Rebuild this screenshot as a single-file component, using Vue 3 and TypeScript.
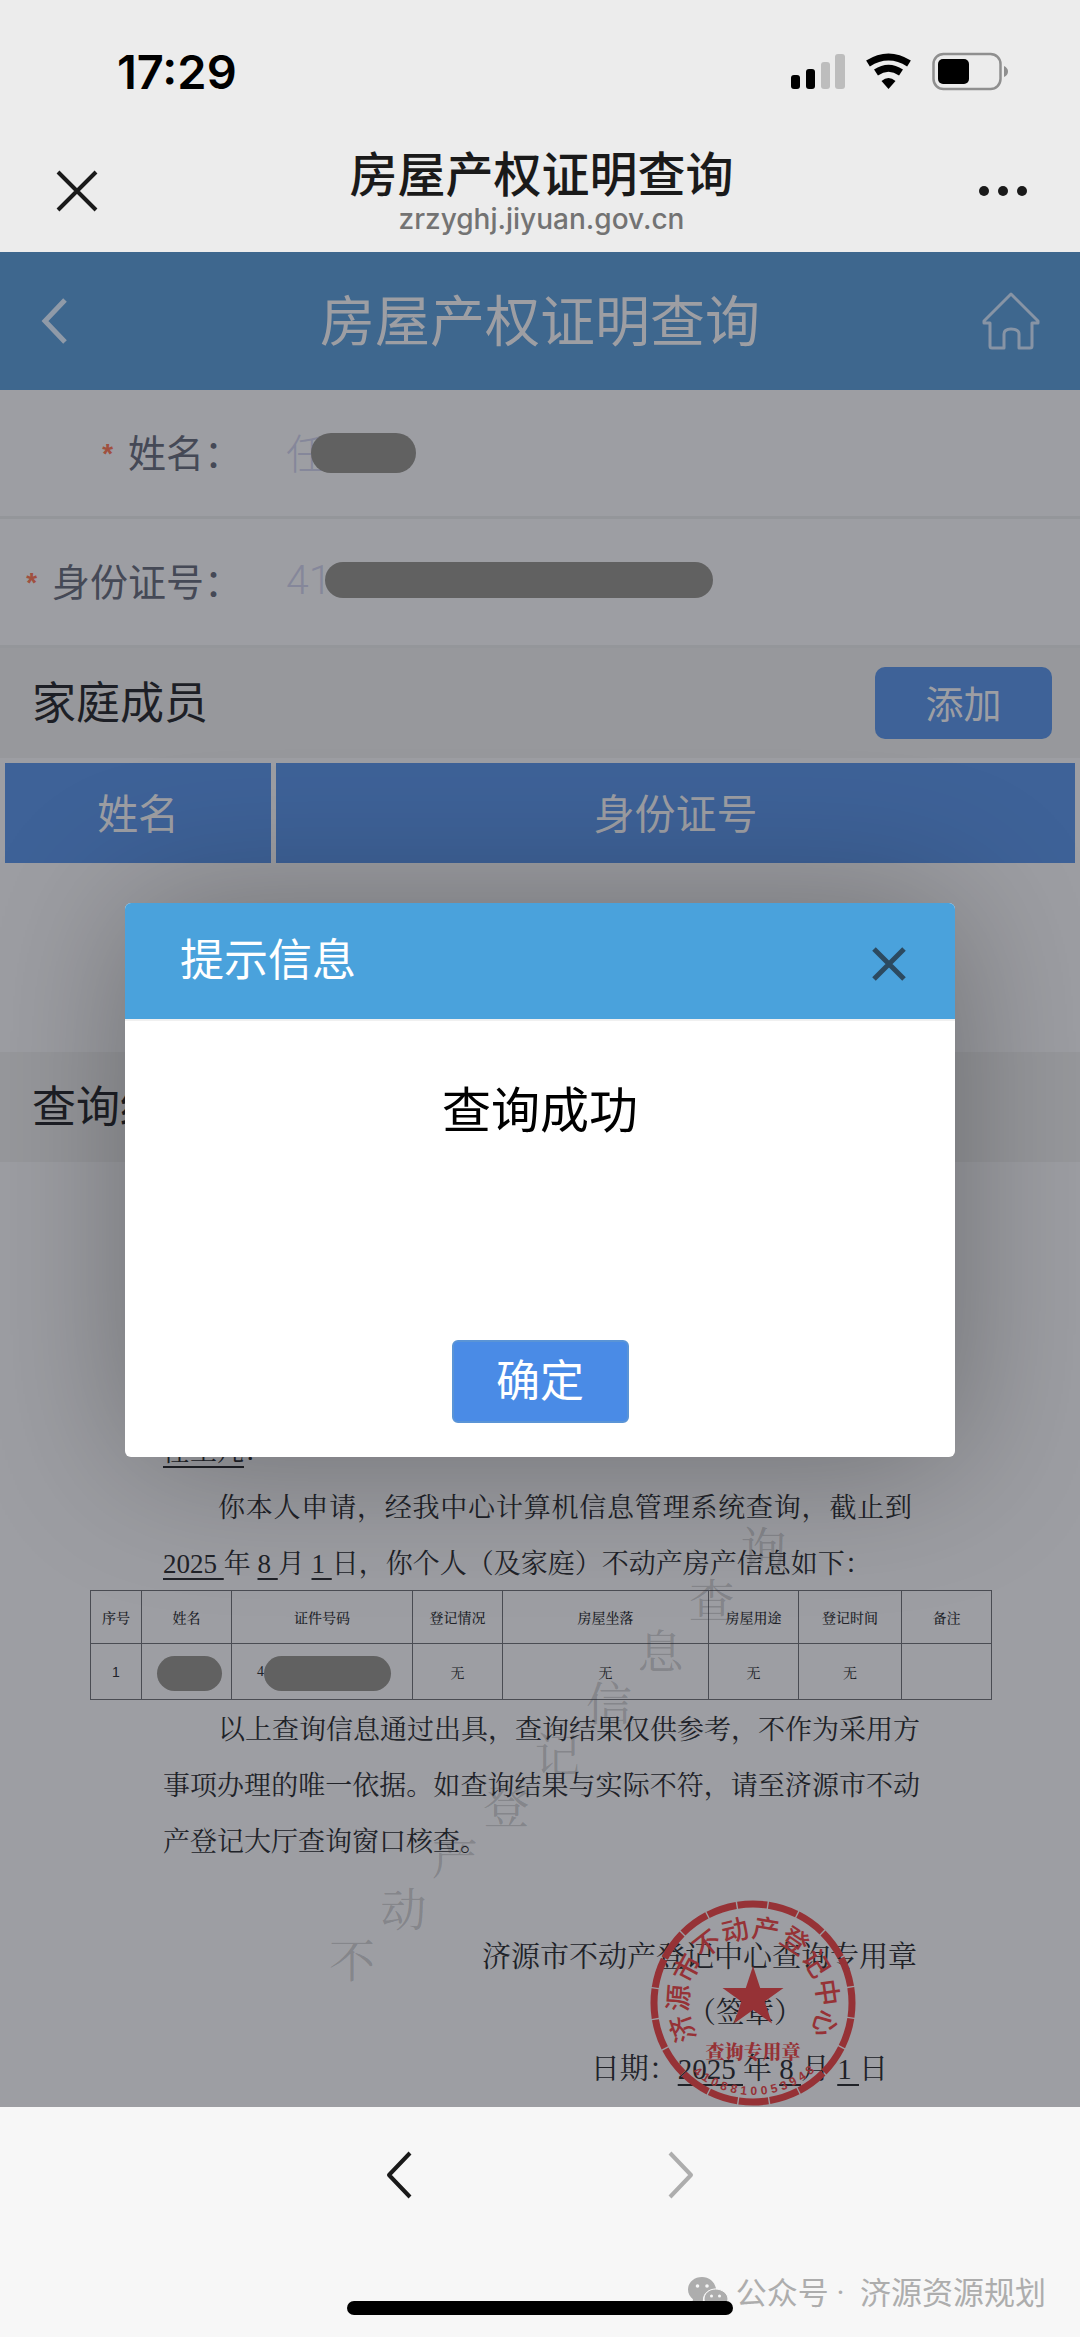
<script setup lang="ts">
import { ref } from 'vue'

interface SealGlyph {
  char: string
  x: number
  y: number
  turn: number
}

const dialogOpen = ref(true)
const ownerName = ref('任')
const ownerId = ref('41')

const recordColumns = ['序号', '姓名', '证件号码', '登记情况', '房屋坐落', '房屋用途', '登记时间', '备注']
const watermark = Array.from('不动产登记信息查询')

// Lays characters along an arc; angles are in degrees clockwise from the top.
function topArc(text: string, radius: number, start: number, step: number): SealGlyph[] {
  return Array.from(text).map((char, i) => {
    const angle = start + i * step
    const rad = (angle * Math.PI) / 180
    return { char, x: Math.sin(rad) * radius, y: -Math.cos(rad) * radius, turn: angle }
  })
}

function bottomArc(text: string, radius: number, start: number, step: number): SealGlyph[] {
  return Array.from(text).map((char, i) => {
    const angle = start + i * step
    const rad = (angle * Math.PI) / 180
    return { char, x: Math.sin(rad) * radius, y: Math.cos(rad) * radius, turn: -angle }
  })
}

const sealName = topArc('济源市不动产登记中心', 75, -110, 24)
const sealCode = bottomArc('4108810053948', 88, -39, 6.6)
</script>

<template>
  <div class="screen">
    <header class="chrome">
      <div class="status">
        <span class="clock">17:29</span>
        <svg class="status-icons" viewBox="0 0 220 40" aria-hidden="true">
          <rect x="2" y="23" width="9" height="14" rx="3" />
          <rect x="17" y="17" width="9" height="20" rx="3" />
          <rect x="32" y="10" width="9" height="27" rx="3" fill="#bdbdbd" />
          <rect x="46" y="2" width="10" height="35" rx="3" fill="#bdbdbd" />
          <g fill="none" stroke="#000" stroke-width="7">
            <path d="M79 11.500 Q99.500 -1.500 120 11.500" />
            <path d="M87 20.500 Q99.500 12 112 20.500" />
          </g>
          <path d="M92.500 29 Q99.500 23 106.500 29 L99.500 37 Z" />
          <rect x="144.500" y="2" width="67" height="35" rx="10" fill="none" stroke="#8f8f8f" stroke-width="2.500" />
          <rect x="149" y="7" width="31" height="25" rx="5" />
          <path d="M215 14 Q219 16 219 19.500 Q219 23 215 25 Z" fill="#8f8f8f" />
        </svg>
      </div>
      <div class="nav">
        <button class="icon-button" type="button" aria-label="关闭">
          <svg width="42" height="42" viewBox="0 0 42 42" fill="none" stroke="#1a1a1a" stroke-width="4">
            <path d="M2 2 L40 40 M40 2 L2 40" />
          </svg>
        </button>
        <div class="nav-title">
          <h1>房屋产权证明查询</h1>
          <p>zrzyghj.jiyuan.gov.cn</p>
        </div>
        <button class="icon-button" type="button" aria-label="更多">
          <svg width="50" height="12" viewBox="0 0 50 12" fill="#1a1a1a">
            <circle cx="7" cy="6" r="5" />
            <circle cx="26" cy="6" r="5" />
            <circle cx="45" cy="6" r="5" />
          </svg>
        </button>
      </div>
    </header>

    <main class="web">
      <div class="banner">
        <button class="icon-button" type="button" aria-label="返回">
          <svg width="30" height="48" viewBox="0 0 30 48" fill="none" stroke="#8f9aa8" stroke-width="5">
            <path d="M25 3 L5 24 L25 45" />
          </svg>
        </button>
        <h2>房屋产权证明查询</h2>
        <button class="icon-button" type="button" aria-label="首页">
          <svg width="58" height="58" viewBox="0 0 58 58" fill="none" stroke="#8794a5" stroke-width="3" stroke-linejoin="round">
            <path d="M29 2 L56 29 V31 H50 V54 Q50 56 48 56 H37 V42 Q37 37 29 37 Q22 37 22 42 V56 H10 Q8 56 8 54 V31 H2 V29 Z" />
          </svg>
        </button>
      </div>

      <form class="fields" @submit.prevent>
        <div class="field">
          <label for="owner-name"><i>*</i>姓名：</label>
          <div class="value">
            <input id="owner-name" v-model="ownerName" type="text" />
            <span class="mask mask-name"></span>
          </div>
        </div>
        <div class="field">
          <label for="owner-id"><i>*</i>身份证号：</label>
          <div class="value">
            <input id="owner-id" v-model="ownerId" type="text" />
            <span class="mask mask-id"></span>
          </div>
        </div>
      </form>

      <div class="section">
        <h3>家庭成员</h3>
        <button class="add" type="button">添加</button>
      </div>
      <div class="members">
        <table>
          <thead>
            <tr>
              <th class="member-name">姓名</th>
              <th>身份证号</th>
            </tr>
          </thead>
        </table>
      </div>
      <div class="section">
        <h3>查询结果</h3>
      </div>

      <article class="doc">
        <p class="line"><u>任工几</u>：</p>
        <p class="line indent first">你本人申请，经我中心计算机信息管理系统查询，截止到</p>
        <p class="line"><u>2025&nbsp;</u>年 <u>8&nbsp;</u>月 <u>1&nbsp;</u>日，你个人（及家庭）不动产房产信息如下：</p>

        <table class="records">
          <colgroup>
            <col v-for="(c, i) in recordColumns" :key="c" :class="'c' + i" />
          </colgroup>
          <thead>
            <tr>
              <th v-for="c in recordColumns" :key="c">{{ c }}</th>
            </tr>
          </thead>
          <tbody>
            <tr>
              <td class="index">1</td>
              <td><span class="cell-mask short"></span></td>
              <td><span class="id-cell">4<span class="cell-mask long"></span></span></td>
              <td>无</td>
              <td>无</td>
              <td>无</td>
              <td>无</td>
              <td></td>
            </tr>
          </tbody>
        </table>

        <p class="line indent full">以上查询信息通过出具，查询结果仅供参考，不作为采用方</p>
        <p class="line full">事项办理的唯一依据。如查询结果与实际不符，请至济源市不动</p>
        <p class="line">产登记大厅查询窗口核查。</p>

        <div class="sign">
          <p>济源市不动产登记中心查询专用章</p>
          <p class="stamp-note">（签章）</p>
          <p class="sign-date">日期：<u>2025&nbsp;</u>年 <u>8&nbsp;</u>月 <u>1&nbsp;</u>日</p>
        </div>

        <svg class="watermark" viewBox="0 0 460 460" aria-hidden="true">
          <text v-for="(ch, i) in watermark" :key="i" :x="24 + i * 51.4" :y="453 - i * 51.5">{{ ch }}</text>
        </svg>

        <svg class="seal" viewBox="-103 -103 206 206" role="img" aria-label="查询专用章">
          <circle r="99" pathLength="360" transform="rotate(-81)" />
          <path d="M0 -37 L7.200 -15 H30.500 L11.700 -1.500 L19 20.500 L0 7 L-19 20.500 L-11.700 -1.500 L-30.500 -15 H-7.200 Z" />
          <text
            v-for="(g, i) in sealName"
            :key="'n' + i"
            class="seal-name"
            dy="10"
            :transform="`translate(${g.x} ${g.y}) rotate(${g.turn})`"
          >{{ g.char }}</text>
          <text class="seal-use" y="56">查询专用章</text>
          <text
            v-for="(g, i) in sealCode"
            :key="'c' + i"
            class="seal-code"
            dy="4"
            :transform="`translate(${g.x} ${g.y}) rotate(${g.turn})`"
          >{{ g.char }}</text>
        </svg>
      </article>

      <div v-if="dialogOpen" class="layer">
        <section class="dialog" role="dialog" aria-labelledby="dialog-title">
          <header>
            <h2 id="dialog-title">提示信息</h2>
            <button class="icon-button" type="button" aria-label="关闭" @click="dialogOpen = false">
              <svg width="34" height="34" viewBox="0 0 34 34" fill="none" stroke="#2c4a60" stroke-width="5">
                <path d="M2 2 L32 32 M32 2 L2 32" />
              </svg>
            </button>
          </header>
          <p>查询成功</p>
          <footer>
            <button class="ok" type="button" @click="dialogOpen = false">确定</button>
          </footer>
        </section>
      </div>
    </main>

    <footer class="toolbar">
      <div class="history">
        <button class="icon-button" type="button" aria-label="后退">
          <svg width="28" height="50" viewBox="0 0 28 50" fill="none" stroke="#1a1a1a" stroke-width="4" stroke-linejoin="round">
            <path d="M25 3 L4 25 L25 47" />
          </svg>
        </button>
        <button class="icon-button" type="button" aria-label="前进" disabled>
          <svg width="28" height="50" viewBox="0 0 28 50" fill="none" stroke="#adadad" stroke-width="4" stroke-linejoin="round">
            <path d="M3 3 L24 25 L3 47" />
          </svg>
        </button>
      </div>
      <div class="account">
        <svg width="42" height="36" viewBox="0 0 42 36" aria-hidden="true">
          <path
            d="M15 1 C7 1 1 6.500 1 13.500 C1 17.500 3 21 6 23.300 L5 28 L10 25.500 Q12 26.200 15 26.200 L16 26 C15 18 21 13 29 12.800 C28 6 22 1 15 1 Z"
            fill="#adadad"
          />
          <path
            d="M28.500 13 C22 13 17 17.500 17 23 C17 28.500 22 32.500 28.500 32.500 Q31 32.500 33 31.800 L37 34 L36 30.500 C39 28.500 41 26 41 23 C41 17.500 35 13 28.500 13 Z"
            fill="#adadad"
            stroke="#f7f7f7"
          />
          <g fill="#f7f7f7">
            <circle cx="10.500" cy="10" r="1.800" />
            <circle cx="20" cy="10" r="1.800" />
            <circle cx="24.500" cy="20" r="1.500" />
            <circle cx="32.500" cy="20" r="1.500" />
          </g>
        </svg>
        <span>公众号 ·&nbsp; 济源资源规划</span>
      </div>
      <div class="home-bar"></div>
    </footer>
  </div>
</template>

<style>
body {
  margin: 0;
  background: #f7f7f7;
}
</style>

<style scoped>
.screen {
  display: flex;
  flex-direction: column;
  min-height: 100vh;
  font-family: Inter, "Noto Sans CJK SC", sans-serif;
}

h1,
h2,
h3,
p {
  margin: 0;
  font-weight: 400;
}

button {
  font-family: "Noto Sans CJK SC", sans-serif;
  cursor: pointer;
}

.icon-button {
  display: flex;
  padding: 0;
  border: 0;
  background: none;
}

.chrome {
  height: 252px;
  background: #ececec;
}

.status {
  display: flex;
  align-items: center;
  justify-content: space-between;
  height: 144px;
  padding: 0 71px 0 117px;
  box-sizing: border-box;
}

.clock {
  font-size: 47px;
  font-weight: 600;
  line-height: 48px;
}

.status-icons {
  width: 220px;
  height: 40px;
}

.nav,
.banner {
  display: grid;
  grid-template-columns: 1fr auto 1fr;
  align-items: center;
}

.nav > :last-child,
.banner > :last-child {
  justify-self: end;
}

.nav {
  height: 94px;
  padding: 0 53px 0 56px;
}

.nav-title {
  text-align: center;
}

.nav-title h1 {
  color: #1a1a1a;
  font-size: 48px;
  font-weight: 500;
  line-height: 56px;
}

.nav-title p {
  color: #737373;
  font-size: 28px;
  font-weight: 500;
  line-height: 32px;
}

.web {
  position: relative;
  flex: 1;
  background: #9d9ea3;
}

.banner {
  height: 138px;
  padding: 0 40px;
  background: #3e678e;
}

.banner h2 {
  color: #9d9ea3;
  font-size: 55px;
  line-height: 64px;
}

.field {
  display: flex;
  align-items: center;
  height: 129px;
  border-bottom: 3px solid #94969a;
  box-sizing: border-box;
}

.field label {
  display: flex;
  align-items: center;
  justify-content: flex-end;
  width: 242px;
  padding-bottom: 4px;
  margin-right: 44px;
  color: #454956;
  font-family: "Noto Sans CJK SC", sans-serif;
  font-size: 38px;
  line-height: 48px;
}

.field i {
  padding-top: 12px;
  margin-right: 12px;
  color: #a0503f;
  font-family: "Liberation Mono", monospace;
  font-size: 28px;
  font-style: normal;
  font-weight: 700;
  line-height: 36px;
}

.value {
  position: relative;
  flex: 1;
}

.value input {
  display: block;
  width: 100%;
  height: 56px;
  padding: 0 0 4px;
  border: 0;
  outline: 0;
  background: none;
  box-sizing: border-box;
  color: #85879a;
  font-family: Roboto, "Noto Sans CJK SC", sans-serif;
  font-size: 41px;
  font-weight: 300;
}

.mask {
  position: absolute;
  top: 8px;
  height: 40px;
  border-radius: 20px;
  background: #616161;
}

.mask-name {
  left: 25px;
  width: 105px;
}

.mask-id {
  left: 39px;
  width: 388px;
  height: 36px;
}

.section {
  display: flex;
  align-items: center;
  justify-content: space-between;
  height: 110px;
  padding: 0 28px 0 32px;
  background: #97989c;
}

.section h3 {
  color: #1d1f26;
  font-size: 44px;
  line-height: 52px;
}

.add {
  width: 177px;
  height: 72px;
  padding: 0 0 4px;
  border: 0;
  border-radius: 10px;
  background: #3e6298;
  color: #9d9ea3;
  font-size: 38px;
}

.members {
  min-height: 294px;
}

.members table {
  width: 100%;
  border-spacing: 5px;
}

.members th {
  height: 96px;
  padding: 0 0 4px;
  background: #3e6298;
  color: #9d9ea3;
  font-size: 41px;
  font-weight: 400;
}

.member-name {
  width: 25%;
}

.doc {
  position: relative;
  padding: 262px 0 9px;
  color: #202228;
  font-family: "Liberation Serif", "Noto Serif CJK SC", "Noto Sans CJK SC", serif;
  font-weight: 400;
}

.line {
  padding: 0 160px 0 163px;
  font-size: 27px;
  line-height: 56px;
}

.line u,
.sign u {
  text-underline-offset: 5px;
  text-decoration-thickness: 2px;
}

.line.indent {
  padding-left: 218px;
}

.line.first {
  padding-right: 168px;
  text-align-last: justify;
}

.line.full {
  text-align-last: justify;
}

.records {
  width: calc(100% - 178px);
  margin: -2px 88px 2px 90px;
  border-collapse: collapse;
  table-layout: fixed;
  font-size: 14px;
}

.c0 {
  width: 51px;
}

.c1,
.c3,
.c5,
.c7 {
  width: 90px;
}

.c2 {
  width: 181px;
}

.c4 {
  width: 206px;
}

.c6 {
  width: 103px;
}

.records th,
.records td {
  height: 52px;
  padding: 0;
  border: 1px solid #4a4c53;
  text-align: center;
  font-weight: 400;
}

.records th {
  font-weight: 500;
}

.records td {
  height: 55px;
}

.records .index {
  font-family: "Liberation Sans", sans-serif;
}

.cell-mask {
  display: block;
  height: 35px;
  border-radius: 18px;
  background: #616161;
}

.short {
  width: 65px;
  margin: 4px 9px 0 auto;
}

.long {
  width: 127px;
  margin-top: 4px;
}

.id-cell {
  display: flex;
  align-items: center;
  margin-left: 25px;
}

.sign {
  padding: 59px 163px 0;
  text-align: right;
}

.sign p {
  font-size: 29px;
  line-height: 56px;
}

.sign .stamp-note {
  padding-right: 114px;
}

.sign .sign-date {
  padding-right: 29px;
}

.watermark {
  position: absolute;
  left: 328px;
  bottom: 122px;
  width: 460px;
  height: 460px;
  overflow: visible;
  fill: #303238;
  fill-opacity: 0.24;
  font-size: 46px;
  text-anchor: middle;
}

.seal {
  position: absolute;
  right: 224px;
  bottom: 0;
  width: 206px;
  height: 206px;
  fill: #963236;
  text-anchor: middle;
}

.seal circle {
  fill: none;
  stroke: #963236;
  stroke-width: 7px;
  stroke-dasharray: 17.2 0.8;
}

.seal-name {
  font-family: "Noto Sans CJK SC", sans-serif;
  font-size: 27px;
  font-weight: 500;
}

.seal-use {
  font-size: 19px;
  font-weight: 900;
}

.seal-code {
  font-family: "Liberation Sans", sans-serif;
  font-size: 12px;
  font-weight: 700;
}

.layer {
  position: absolute;
  inset: 0;
  display: flex;
  align-items: center;
  justify-content: center;
}

.dialog {
  width: calc(100% - 250px);
  overflow: hidden;
  border-radius: 6px;
  background: #fff;
  box-shadow: 3px 3px 150px rgba(0, 0, 0, 0.3);
}

.dialog header {
  display: flex;
  align-items: center;
  justify-content: space-between;
  height: 116px;
  padding: 0 49px 0 55px;
  border-bottom: 2px solid #f0f0f0;
  background: #4aa2dc;
}

.dialog h2 {
  padding-bottom: 2px;
  color: #fff;
  font-size: 44px;
  line-height: 52px;
}

.dialog .icon-button {
  padding-top: 6px;
}

.dialog p {
  min-height: 260px;
  padding-top: 60px;
  color: #000;
  font-size: 49px;
  line-height: 60px;
  text-align: center;
  box-sizing: border-box;
}

.dialog footer {
  display: flex;
  justify-content: center;
  padding: 59px 0 34px;
}

.ok {
  width: 177px;
  height: 83px;
  padding: 0 0 6px;
  border: 2px solid #5a94d6;
  border-radius: 6px;
  background: #4a8be6;
  color: #fff;
  font-size: 44px;
}

.toolbar {
  position: relative;
  height: 230px;
  background: #f7f7f7;
}

.history {
  display: flex;
  justify-content: center;
  gap: 254px;
  padding-top: 43px;
}

.account {
  display: flex;
  align-items: center;
  justify-content: flex-end;
  gap: 7px;
  margin: 74px 34px 0 0;
  color: #adadad;
  font-family: Roboto, "Noto Sans CJK SC", sans-serif;
  font-size: 31px;
  line-height: 40px;
}

.home-bar {
  position: absolute;
  bottom: 22px;
  left: 50%;
  width: 386px;
  height: 14px;
  border-radius: 7px;
  background: #000;
  transform: translateX(-50%);
}
</style>
